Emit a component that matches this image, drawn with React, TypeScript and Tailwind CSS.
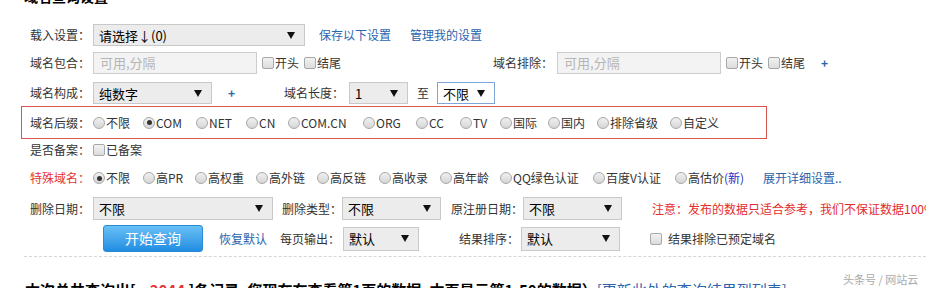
import React from "react";

type SelectProps = {
    w: string;
    value: string;
    focused?: boolean;
};

function Select({ w, value, focused }: SelectProps) {
    return (
        <div
            className={
                "shrink-0 flex items-center justify-between pl-[5px] pr-[9px] text-[13px] text-black border " +
                w +
                (focused ? " h-[22px] bg-white border-[#7ea7d9]" : " h-full bg-[#ececec] border-[#c9c9c9]")
            }
        >
            <span className="leading-none">{value}</span>
            <svg width="8" height="7" viewBox="0 0 8 7">
                <path d="M0 0 L8 0 L4 7 Z" fill="#111" />
            </svg>
        </div>
    );
}

function Input({ w }: { w: string }) {
    return (
        <div className={"shrink-0 h-full flex items-center pl-[6px] bg-[#f3f3f3] border border-[#cdcdcd] text-[13px] text-[#b5b5b5] " + w}>
            可用,分隔
        </div>
    );
}

function Checkbox({ label, gap = "ml-[1px]" }: { label: string; gap?: string }) {
    return (
        <span className="flex items-center shrink-0">
            <span className="w-[12px] h-[12px] rounded-[2px] border border-[#a8a8a8] bg-gradient-to-b from-[#f2f2f2] to-[#dcdcdc]" />
            <span className={gap}>{label}</span>
        </span>
    );
}

function Radio({ label, checked, w }: { label: React.ReactNode; checked?: boolean; w: number }) {
    return (
        <span className="flex items-center shrink-0" style={{ width: w }}>
            <span className="w-[12px] h-[12px] rounded-full border border-[#a8a8a8] bg-gradient-to-b from-[#f0f0f0] to-[#d6d6d6] flex items-center justify-center">
                {checked && <span className="w-[5px] h-[5px] rounded-full bg-[#333]" />}
            </span>
            <span className="ml-[1px] whitespace-nowrap">{label}</span>
        </span>
    );
}

const Label = ({ text, className = "" }: { text: string; className?: string }) => (
    <span className={"w-[63px] shrink-0 " + className}>{text}：</span>
);

// label, width up to the next option
const suffixes: [string, number][] = [
    ["不限", 50],
    ["COM", 53],
    ["NET", 50],
    ["CN", 42],
    ["COM.CN", 75],
    ["ORG", 53],
    ["CC", 44],
    ["TV", 40],
    ["国际", 48],
    ["国内", 49],
    ["排除省级", 73],
    ["自定义", 50],
];

const specials: [string, number][] = [
    ["高PR", 52],
    ["高权重", 61],
    ["高外链", 61],
    ["高反链", 62],
    ["高收录", 61],
    ["高年龄", 60],
    ["QQ绿色认证", 93],
    ["百度V认证", 82],
];

export default function App() {
    return (
        <div
            className="relative w-[926px] h-[288px] overflow-hidden bg-white text-[12px] text-[#333]"
            style={{ fontFamily: '"Noto Sans CJK SC", "Noto Sans", sans-serif' }}
        >
            <div className="ml-[24px] -mt-[11px] h-[15px] text-[14px] leading-[15px] font-bold text-black">域名查询设置</div>

            {/* 载入设置 */}
            <div className="flex items-center h-[22px] mt-[20px] pl-[30px]">
                <Label text="载入设置" />
                <Select w="w-[212px]" value="请选择↓(0)" />
                <a className="ml-[14px] text-[#2a64ad]">保存以下设置</a>
                <a className="ml-[19px] text-[#2a64ad]">管理我的设置</a>
            </div>

            {/* 域名包含 */}
            <div className="flex items-center h-[22px] mt-[6px] pl-[30px]">
                <Label text="域名包合" />
                <Input w="w-[164px]" />
                <span className="ml-[5px]"><Checkbox label="开头" /></span>
                <span className="ml-[5px]"><Checkbox label="结尾" /></span>
                <span className="ml-[152px] w-[64px] shrink-0">域名排除：</span>
                <Input w="w-[164px]" />
                <span className="ml-[5px]"><Checkbox label="开头" /></span>
                <span className="ml-[5px]"><Checkbox label="结尾" /></span>
                <span className="ml-[16px] text-[#2a64ad] font-bold">+</span>
            </div>

            {/* 域名构成 */}
            <div className="flex items-center h-[22px] mt-[8px] pl-[30px]">
                <Label text="域名构成" />
                <Select w="w-[119px]" value="纯数字" />
                <span className="ml-[16px] text-[#2a64ad] font-bold">+</span>
                <span className="ml-[49px] w-[65px] shrink-0">域名长度：</span>
                <Select w="w-[59px]" value="1" />
                <span className="ml-[9px]">至</span>
                <span className="ml-[8px]">
                    <Select w="w-[58px]" value="不限" focused />
                </span>
            </div>

            {/* 域名后缀 */}
            <div className="flex items-center h-[33px] mt-[2px] ml-[21px] w-[746px] border border-[#d9534f] pl-[8px]">
                <Label text="域名后缀" />
                <div className="flex items-center">
                    {suffixes.map(([s, w]) => (
                        <Radio key={s} label={s} w={w} checked={s === "COM"} />
                    ))}
                </div>
            </div>

            {/* 是否备案 */}
            <div className="flex items-center h-[20px] mt-[1px] pl-[30px]">
                <Label text="是否备案" />
                <Checkbox label="已备案" />
            </div>

            {/* 特殊域名 */}
            <div className="flex items-center h-[20px] mt-[8px] pl-[30px]">
                <Label text="特殊域名" className="text-[#e53333]" />
                <div className="flex items-center">
                    <Radio label="不限" w={50} checked />
                    {specials.map(([s, w]) => (
                        <Radio key={s} label={s} w={w} />
                    ))}
                    <Radio
                        w={88}
                        label={
                            <>
                                高估价<span className="text-[#2b2bc8]">(新)</span>
                            </>
                        }
                    />
                    <a className="text-[#2a64ad] whitespace-nowrap">展开详细设置..</a>
                </div>
            </div>

            {/* 删除日期 */}
            <div className="flex items-center h-[23px] mt-[9px] pl-[30px] whitespace-nowrap">
                <Label text="删除日期" />
                <Select w="w-[180px]" value="不限" />
                <span className="ml-[9px] w-[60px] shrink-0">删除类型：</span>
                <Select w="w-[99px]" value="不限" />
                <span className="ml-[10px] w-[72px] shrink-0">原注册日期：</span>
                <Select w="w-[99px]" value="不限" />
                <span className="ml-[30px] shrink-0 text-[#e52c2c]">注意：发布的数据只适合参考，我们不保证数据100%准确</span>
            </div>

            {/* 按钮行 */}
            <div className="flex items-center h-[27px] mt-[5px] pl-[103px]">
                <button className="shrink-0 w-[100px] h-[27px] rounded-[3px] border border-[#2a8ad6] bg-gradient-to-b from-[#68c0f5] to-[#1d8de2] text-white text-[14px]">
                    开始查询
                </button>
                <a className="ml-[16px] text-[#2a64ad]">恢复默认</a>
                <span className="ml-[13px] w-[63px] shrink-0">每页输出：</span>
                <div className="h-[24px]">
                    <Select w="w-[76px]" value="默认" />
                </div>
                <span className="ml-[40px] w-[62px] shrink-0">结果排序：</span>
                <div className="h-[24px]">
                    <Select w="w-[99px]" value="默认" />
                </div>
                <span className="ml-[30px]">
                    <Checkbox label="结果排除已预定域名" gap="ml-[6px]" />
                </span>
            </div>

            <div className="mt-[4px] ml-[24px] border-t border-dashed border-[#d6d6d6]" />

            <div className="mt-[23px] ml-[25px] text-[15px] leading-[20px] font-bold text-black whitespace-nowrap">
                本次总共查询出[<span className="ml-[14px] text-[#e53333]">2044</span> ]条记录, 您现在在查看第1页的数据, 本页显示第1-50的数据）
                <span className="font-normal text-[#2a64ad]">[更新此处的查询结果到列表]</span>
            </div>

            <div className="absolute left-[843px] top-[271px] text-[11px] text-[#aaa] whitespace-nowrap">头条号 / 网站云</div>
        </div>
    );
}
